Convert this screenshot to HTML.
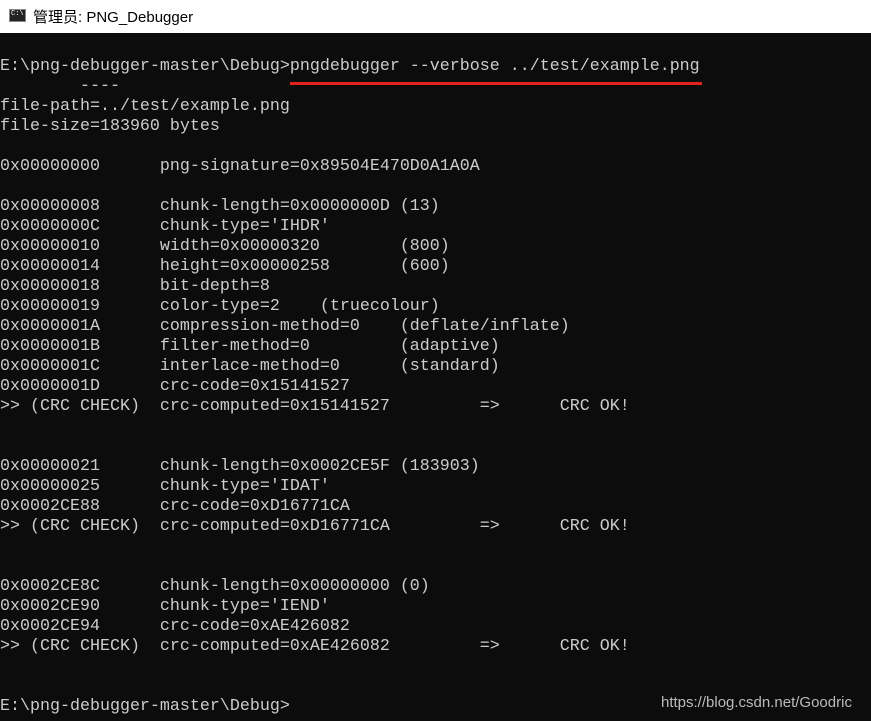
<!DOCTYPE html>
<html><head><meta charset="utf-8"><style>
html,body{margin:0;padding:0;width:871px;height:721px;overflow:hidden;background:#0c0c0c}
.t{position:absolute;left:0;top:0;width:871px;height:33px;background:#fff;font-family:"Liberation Sans","Noto Sans CJK SC",sans-serif;font-size:15px;color:#000}
.t span{position:absolute;left:33px;top:6px}
.ic{position:absolute;left:9px;top:9px;width:17px;height:13px;background:#222;border:1px solid #888;box-sizing:border-box}
.ic:after{content:"C:\\";position:absolute;left:1px;top:0;font:7px "Liberation Mono",monospace;color:#fff}
pre{position:absolute;left:0;top:57px;margin:0;font-family:"Liberation Mono",monospace;font-size:16.667px;line-height:20px;color:#cccccc}
.u{position:absolute;left:290px;top:82px;width:412px;height:3px;background:#e0231c}
.w{position:absolute;left:661px;top:694px;font:15px "Liberation Sans",sans-serif;color:#bbb}
</style></head><body>
<div class="t"><div class="ic"></div><span>管理员: PNG_Debugger</span></div>
<pre>E:\png-debugger-master\Debug&gt;pngdebugger --verbose ../test/example.png
        ----
file-path=../test/example.png
file-size=183960 bytes

0x00000000      png-signature=0x89504E470D0A1A0A

0x00000008      chunk-length=0x0000000D (13)
0x0000000C      chunk-type='IHDR'
0x00000010      width=0x00000320        (800)
0x00000014      height=0x00000258       (600)
0x00000018      bit-depth=8
0x00000019      color-type=2    (truecolour)
0x0000001A      compression-method=0    (deflate/inflate)
0x0000001B      filter-method=0         (adaptive)
0x0000001C      interlace-method=0      (standard)
0x0000001D      crc-code=0x15141527
&gt;&gt; (CRC CHECK)  crc-computed=0x15141527         =&gt;      CRC OK!


0x00000021      chunk-length=0x0002CE5F (183903)
0x00000025      chunk-type='IDAT'
0x0002CE88      crc-code=0xD16771CA
&gt;&gt; (CRC CHECK)  crc-computed=0xD16771CA         =&gt;      CRC OK!


0x0002CE8C      chunk-length=0x00000000 (0)
0x0002CE90      chunk-type='IEND'
0x0002CE94      crc-code=0xAE426082
&gt;&gt; (CRC CHECK)  crc-computed=0xAE426082         =&gt;      CRC OK!


E:\png-debugger-master\Debug&gt;</pre>
<div class="u"></div>
<div class="w">https://blog.csdn.net/Goodric</div>
</body></html>
